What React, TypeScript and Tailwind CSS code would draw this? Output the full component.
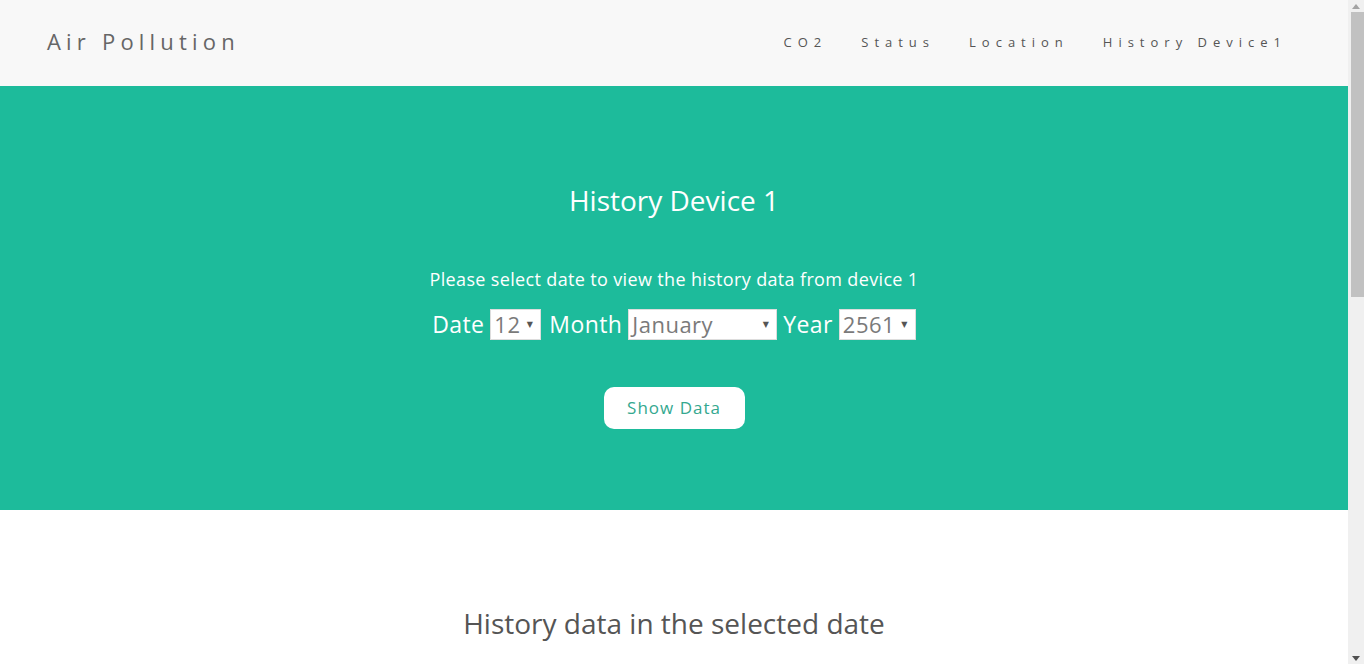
import React from 'react';

const font = { fontFamily: '"Open Sans", "DejaVu Sans", sans-serif' };

const navLinks = ['CO2', 'Status', 'Location', 'History Device1'];

const FakeSelect: React.FC<{ value: string; width: string }> = ({ value, width }) => (
  <div className={`${width} h-[31px] bg-white border border-[#ddd] flex items-center justify-between pl-[3px] pr-[7px]`}>
    <span className="text-[22px] tracking-[0.5px] text-[#7a7a7a] leading-none">{value}</span>
    <span className="text-[8px] text-[#555]">▼</span>
  </div>
);

// browser scrollbar as seen in the screenshot
const ScrollBar = () => (
  <aside className="w-[16px] h-screen bg-[#f0f0f0] flex flex-col items-center">
    <div className="h-[12px] flex items-center justify-center">
      <svg width="8" height="5" viewBox="0 0 8 5">
        <path d="M0 5 L4 0 L8 5 Z" fill="#a3a3a3" />
      </svg>
    </div>
    <div className="w-[13px] ml-[3px] h-[285px] bg-[#c1c1c1]" />
    <div className="flex-1" />
    <div className="h-[12px] flex items-center justify-center">
      <svg width="8" height="5" viewBox="0 0 8 5">
        <path d="M0 0 L8 0 L4 5 Z" fill="#505050" />
      </svg>
    </div>
  </aside>
);

export default function App() {
  return (
    <div className="flex h-screen overflow-hidden bg-white" style={font}>
      <main className="flex-1 min-w-0">
        <nav className="h-[86px] bg-[#f8f8f8] flex items-center justify-between pl-[47px] pr-[61px]">
          <span className="text-[22px] tracking-[5.2px] text-[#666] -mt-[4px]">Air Pollution</span>
          <ul className="flex gap-[34px] text-[13px] tracking-[6px] text-[#555]">
            {navLinks.map((l) => (
              <li key={l}>{l}</li>
            ))}
          </ul>
        </nav>

        <section className="h-[424px] bg-[#1dbb9b] flex flex-col items-center text-white pt-[100px]">
          <h1 className="text-[28px] leading-none">History Device 1</h1>
          <p className="text-[18px] tracking-[0.35px] mt-[52px]">
            Please select date to view the history data from device 1
          </p>
          <div className="flex items-center gap-[6px] mt-[14px] text-[23px] tracking-[0.4px]">
            <span>Date</span>
            <FakeSelect value="12" width="w-[51px]" />
            <span className="ml-[2px]">Month</span>
            <FakeSelect value="January" width="w-[149px]" />
            <span>Year</span>
            <FakeSelect value="2561" width="w-[77px]" />
          </div>
          <button className="mt-[45px] w-[141px] h-[42px] bg-white rounded-[10px] text-[17px] tracking-[1px] text-[#34a88f]">
            Show Data
          </button>
        </section>

        <section className="flex flex-col items-center pt-[92px]">
          <h2 className="text-[28px] text-[#555]">History data in the selected date</h2>
        </section>
      </main>
      <ScrollBar />
    </div>
  );
}
